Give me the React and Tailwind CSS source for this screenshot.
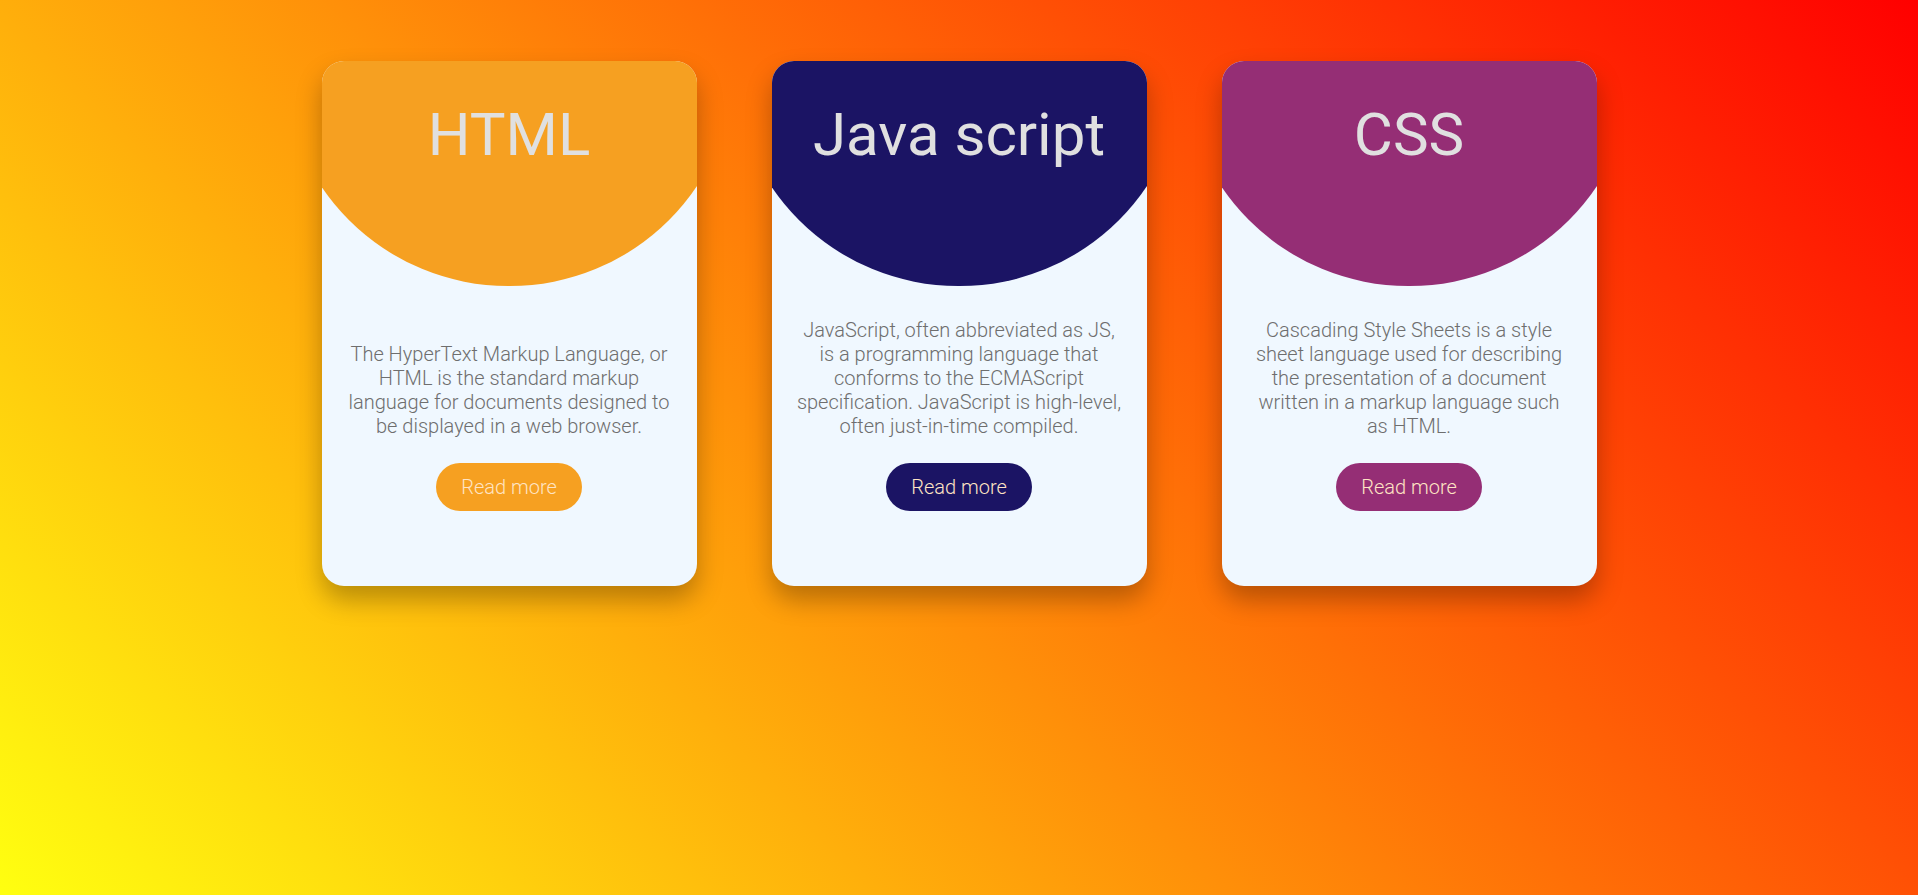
import React from 'react';

const cards = [
    {
        title: 'HTML',
        text: 'The HyperText Markup Language, or HTML is the standard markup language for documents designed to be displayed in a web browser.',
        blob: 'bg-[#f6a021]',
        button: 'bg-[#f6a021]',
    },
    {
        title: 'Java script',
        text: 'JavaScript, often abbreviated as JS, is a programming language that conforms to the ECMAScript specification. JavaScript is high-level, often just-in-time compiled.',
        blob: 'bg-[#1b1464]',
        button: 'bg-[#1b1464]',
    },
    {
        title: 'CSS',
        text: 'Cascading Style Sheets is a style sheet language used for describing the presentation of a document written in a markup language such as HTML.',
        blob: 'bg-[#952e75]',
        button: 'bg-[#952e75]',
    },
];

const Card = ({ card }) => (
    <div className="relative w-[375px] h-[525px] rounded-[22px] overflow-hidden bg-[#f0f8ff] shadow-[0_14px_26px_rgba(0,0,0,0.28)] flex flex-col">
        {/* round colored header blob */}
        <div className={`absolute left-1/2 -translate-x-1/2 top-[-225px] w-[452px] h-[450px] rounded-full ${card.blob}`}></div>

        <h2 className="relative pt-[44px] text-center text-[60px] leading-[60px] font-normal text-[#e0e0e0]">
            {card.title}
        </h2>

        <div className="relative flex-1 flex flex-col justify-end items-center pb-[75px]">
            <p className="w-[325px] text-center text-[20px] leading-[24px] font-light text-[#6e6e6e]">{card.text}</p>
            <button
                className={`mt-[25px] h-[48px] w-[146px] rounded-full text-[20px] font-light text-[#ffe4c4] ${card.button}`}
            >
                Read more
            </button>
        </div>
    </div>
);

const App = () => {
    return (
        <main
            className="w-screen h-screen overflow-hidden bg-[linear-gradient(45deg,#ffff10,#ff0000)] flex justify-center items-start gap-[75px] pt-[61px]"
            style={{ fontFamily: 'Roboto, "Liberation Sans", sans-serif' }}
        >
            {cards.map((card) => (
                <Card key={card.title} card={card} />
            ))}
        </main>
    );
};

export default App;
